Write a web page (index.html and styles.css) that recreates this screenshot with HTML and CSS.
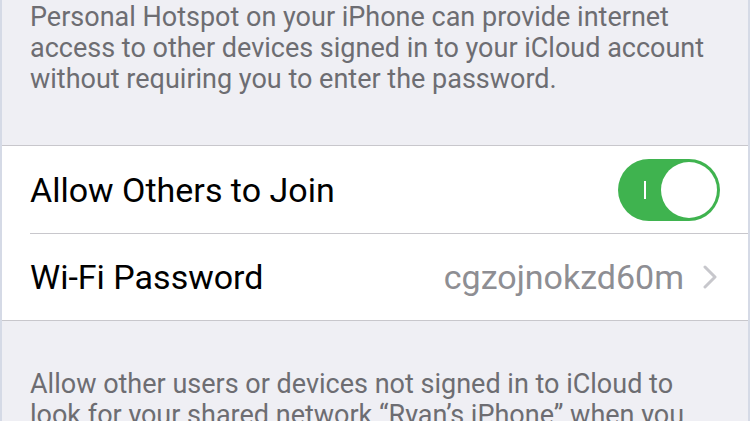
FILE: index.html
```html
<!DOCTYPE html>
<html lang="en">

<head>
    <meta charset="UTF-8">
    <meta name="viewport" content="width=device-width, initial-scale=1.0">
    <title>Personal Hotspot</title>
    <link rel="stylesheet" href="styles.css">
</head>

<body>
    <div class="screen">
        <p class="footnote top-note">Personal Hotspot on your iPhone can provide internet<br>access to other devices signed in to your iCloud account<br>without requiring you to enter the password.</p>
        <section class="group">
            <div class="row">
                <span class="row-label">Allow Others to Join</span>
                <div class="switch on">
                    <span class="switch-mark"></span>
                    <span class="switch-knob"></span>
                </div>
            </div>
            <div class="row">
                <span class="row-label">Wi-Fi Password</span>
                <span class="row-value">cgzojnokzd60m</span>
                <svg class="chevron" width="14" height="24" viewBox="0 0 14 24">
                    <path d="M2 2 L12 12 L2 22" fill="none" stroke="#c7c7cc" stroke-width="3" stroke-linecap="round" stroke-linejoin="round"/>
                </svg>
            </div>
        </section>
        <p class="footnote bottom-note">Allow other users or devices not signed in to iCloud to<br>look for your shared network “Ryan’s iPhone” when you</p>
    </div>
</body>

</html>
```

FILE: styles.css
```css
* {
    box-sizing: border-box;
}

body {
    margin: 0;
    padding: 0;
    background-color: #efeff4;
    font-family: Roboto, "Liberation Sans", sans-serif;
    overflow: hidden;
}

.screen {
    width: 750px;
    height: 421px;
    border-left: 2px solid #d5dae6;
    border-right: 2px solid #d5dae6;
    overflow: hidden;
}

.footnote {
    margin: 0;
    padding: 0 0 0 28px;
    color: #6d6d72;
    font-size: 27px;
    line-height: 31px;
    white-space: nowrap;
}

.top-note {
    height: 145px;
    padding-top: 2px;
}

.group {
    background-color: #ffffff;
    border-top: 1px solid #c8c7cc;
    border-bottom: 1px solid #c8c7cc;
}

.row {
    height: 87px;
    margin-left: 28px;
    padding-right: 31px;
    display: flex;
    align-items: center;
    font-size: 34px;
    color: #000000;
}

.row + .row {
    border-top: 1px solid #c8c7cc;
}

.row:first-child {
    padding-right: 28px;
}

.row-label {
    flex-grow: 1;
}

.row-value {
    color: #8e8e93;
    margin-right: 19px;
}

.chevron {
    flex-shrink: 0;
}

.switch {
    width: 102px;
    height: 62px;
    border-radius: 31px;
    position: relative;
    flex-shrink: 0;
}

.switch.on {
    background-color: #3fb34f;
}

.switch-mark {
    position: absolute;
    left: 26px;
    top: 22px;
    width: 2px;
    height: 18px;
    background-color: #ffffff;
}

.switch-knob {
    position: absolute;
    right: 3px;
    top: 3px;
    width: 56px;
    height: 56px;
    border-radius: 50%;
    background-color: #ffffff;
}

.bottom-note {
    padding-top: 48px;
}
```
